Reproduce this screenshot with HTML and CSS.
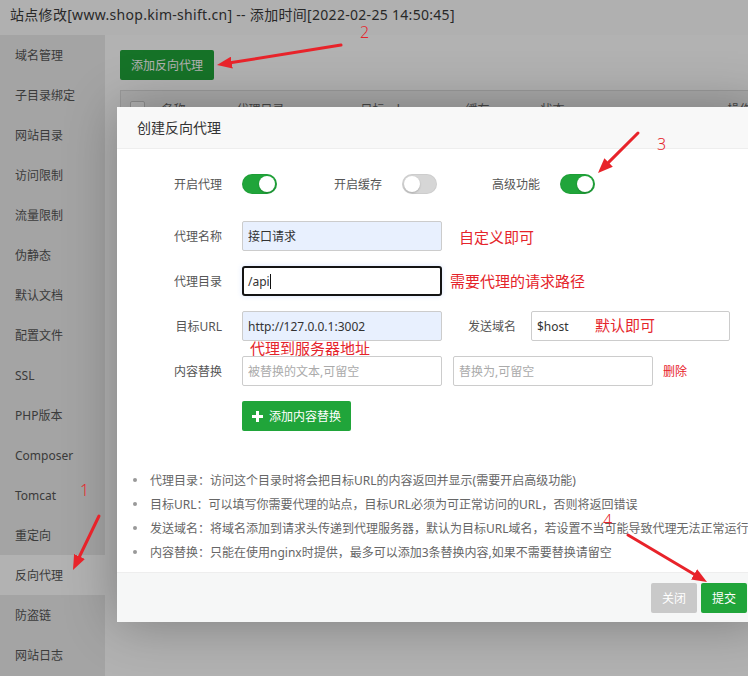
FILE: index.html
```html
<!DOCTYPE html>
<html lang="zh-CN">
<head>
<meta charset="utf-8">
<title>站点修改</title>
<link rel="stylesheet" href="styles.css">
</head>
<body>
<div class="page">
  <header class="titlebar">站点修改[www.shop.kim-shift.cn] -- 添加时间[2022-02-25 14:50:45]</header>
  <div class="layout">
    <nav class="sidebar">
      <a class="nav-item">域名管理</a>
      <a class="nav-item">子目录绑定</a>
      <a class="nav-item">网站目录</a>
      <a class="nav-item">访问限制</a>
      <a class="nav-item">流量限制</a>
      <a class="nav-item">伪静态</a>
      <a class="nav-item">默认文档</a>
      <a class="nav-item">配置文件</a>
      <a class="nav-item">SSL</a>
      <a class="nav-item">PHP版本</a>
      <a class="nav-item">Composer</a>
      <a class="nav-item">Tomcat</a>
      <a class="nav-item">重定向</a>
      <a class="nav-item active">反向代理</a>
      <a class="nav-item">防盗链</a>
      <a class="nav-item">网站日志</a>
    </nav>
    <main class="content">
      <button class="btn btn-green btn-add">添加反向代理</button>
      <table class="table">
        <colgroup>
          <col class="c-check"><col class="c-name"><col class="c-dir"><col class="c-url"><col class="c-cache"><col class="c-state"><col class="c-op">
        </colgroup>
        <thead>
          <tr>
            <th><span class="checkbox"></span></th>
            <th>名称</th><th>代理目录</th><th>目标url</th><th>缓存</th><th>状态</th><th>操作</th>
          </tr>
        </thead>
      </table>
    </main>
  </div>
</div>

<div class="shade"></div>

<div class="modal">
  <div class="modal-title">创建反向代理</div>
  <div class="modal-body">
    <div class="form-row switch-row">
      <span class="label">开启代理</span><span class="switch on"></span>
      <span class="label">开启缓存</span><span class="switch"></span>
      <span class="label label-adv">高级功能</span><span class="switch on"></span>
    </div>
    <div class="form-row row-first">
      <label class="label">代理名称</label>
      <input class="input autofill" type="text" value="接口请求">
    </div>
    <div class="form-row">
      <label class="label">代理目录</label>
      <div class="input focus"><span>/api</span><span class="caret"></span></div>
    </div>
    <div class="form-row">
      <label class="label">目标URL</label>
      <input class="input autofill" type="text" value="http://127.0.0.1:3002">
      <label class="label label-send">发送域名</label>
      <input class="input input-host" type="text" value="$host">
    </div>
    <div class="form-row">
      <label class="label">内容替换</label>
      <input class="input" type="text" placeholder="被替换的文本,可留空">
      <input class="input input-to" type="text" placeholder="替换为,可留空">
      <a class="del">删除</a>
    </div>
    <div class="form-row">
      <button class="btn btn-green btn-replace">
        <svg class="plus" width="11" height="11" viewBox="0 0 11 11"><path d="M4 0h3v4h4v3H7v4H4V7H0V4h4z" fill="#fff"/></svg>
        添加内容替换
      </button>
    </div>
    <ul class="help">
      <li>代理目录：访问这个目录时将会把目标URL的内容返回并显示(需要开启高级功能)</li>
      <li>目标URL：可以填写你需要代理的站点，目标URL必须为可正常访问的URL，否则将返回错误</li>
      <li>发送域名：将域名添加到请求头传递到代理服务器，默认为目标URL域名，若设置不当可能导致代理无法正常运行</li>
      <li>内容替换：只能在使用nginx时提供，最多可以添加3条替换内容,如果不需要替换请留空</li>
    </ul>
  </div>
  <div class="modal-footer">
    <button class="btn btn-gray">关闭</button>
    <button class="btn btn-green">提交</button>
  </div>
</div>

<div class="annotations">
  <svg class="arrows" width="748" height="676" viewBox="0 0 748 676">
    <defs>
      <marker id="ah" markerWidth="5" markerHeight="4" refX="0" refY="2" orient="auto" markerUnits="strokeWidth">
        <path d="M0,0 L5,2 L0,4 z" fill="#e8232a"/>
      </marker>
    </defs>
    <g stroke="#e8232a" stroke-width="3" stroke-linecap="round" fill="none">
      <line x1="341" y1="45" x2="231.8" y2="62.6" marker-end="url(#ah)"/>
      <line x1="638" y1="133" x2="608.6" y2="162.4" marker-end="url(#ah)"/>
      <line x1="99" y1="516" x2="79.5" y2="556.5" marker-end="url(#ah)"/>
      <line x1="628" y1="535" x2="694.1" y2="574.3" marker-end="url(#ah)"/>
    </g>
  </svg>
  <span class="note num n2">2</span>
  <span class="note num n3">3</span>
  <span class="note num n1">1</span>
  <span class="note num n4">4</span>
  <span class="note t-name">自定义即可</span>
  <span class="note t-dir">需要代理的请求路径</span>
  <span class="note t-url">代理到服务器地址</span>
  <span class="note t-host">默认即可</span>
</div>
</body>
</html>
```

FILE: styles.css
```css
* { box-sizing: border-box; }
html, body { margin: 0; padding: 0; }
body {
  width: 748px;
  height: 676px;
  overflow: hidden;
  position: relative;
  font-family: "Noto Sans", "Noto Sans CJK SC", sans-serif;
  font-size: 12px;
  color: #333;
  background: #fff;
}

.page { height: 676px; display: flex; flex-direction: column; }
.titlebar {
  height: 35px;
  line-height: 29px;
  padding-left: 10px;
  font-size: 14px;
  letter-spacing: 0.3px;
  color: #3a3a3a;
  background: #fdfdfd;
  white-space: nowrap;
  flex: none;
}
.layout { flex: 1; display: flex; min-height: 0; }
.sidebar { width: 105px; flex: none; background: #ebebeb; }
.nav-item {
  display: block;
  height: 40px;
  line-height: 41px;
  padding-left: 15px;
  color: #555;
  font-size: 12px;
}
.nav-item.active { background: #fff; }

.content { flex: 1; padding: 15px; background: #fff; overflow: hidden; }

.btn {
  height: 30px;
  border: 0;
  border-radius: 2px;
  padding: 0 11px;
  font-family: inherit;
  font-size: 12px;
  color: #fff;
  cursor: pointer;
  display: inline-flex;
  align-items: center;
}
.btn-green { background: #20a53a; }
.btn-gray { background: #c9c9c9; }
.btn-add { padding: 0 11px; }

.table {
  margin-top: 10px;
  width: 660px;
  table-layout: fixed;
  border-collapse: collapse;
  border: 1px solid #ddd;
}
.table th {
  height: 36px;
  padding: 0;
  text-align: left;
  font-weight: normal;
  color: #666;
  background: #f2f2f2;
}
.c-check { width: 41px; }
.c-name { width: 75px; }
.c-dir { width: 124px; }
.c-url { width: 105px; }
.c-cache { width: 75px; }
.c-state { width: 187px; }
.c-op { width: 53px; }
.checkbox {
  display: block;
  width: 15px;
  height: 15px;
  margin-left: 9px;
  border: 1px solid #ccc;
  border-radius: 2px;
  background: #fff;
}

.shade { position: absolute; inset: 0; background: rgba(0, 0, 0, 0.3); }

.modal {
  position: absolute;
  left: 117px;
  top: 107px;
  width: 645px;
  background: #fff;
  box-shadow: 1px 1px 50px rgba(0, 0, 0, 0.3);
}
.modal-title {
  height: 42px;
  line-height: 41px;
  padding-left: 20px;
  font-size: 14px;
  color: #333;
  background: #f8f8f8;
  border-bottom: 1px solid #eee;
}
.modal-body { padding: 25px 0 8px; }

.form-row { display: flex; align-items: center; height: 30px; margin-top: 15px; }
.switch-row { height: 20px; margin-top: 0; }
.row-first { margin-top: 27px; }
.label {
  flex: none;
  width: 125px;
  padding-right: 20px;
  text-align: right;
  color: #555;
}
.label-adv { width: 123px; }
.label-send { width: 89px; padding-right: 15px; }

.switch {
  flex: none;
  position: relative;
  width: 35px;
  height: 20px;
  border-radius: 10px;
  background: #d6d6d6;
  box-shadow: inset 0 0 0 1px rgba(0, 0, 0, 0.04);
}
.switch::after {
  content: "";
  position: absolute;
  top: 2px;
  left: 2px;
  width: 16px;
  height: 16px;
  border-radius: 50%;
  background: #fff;
  box-shadow: 0 1px 2px rgba(0, 0, 0, 0.2);
}
.switch.on { background: #20a53a; }
.switch.on::after { left: 17px; }

.input {
  flex: none;
  width: 200px;
  height: 30px;
  padding: 0 5px;
  border: 1px solid #ccc;
  border-radius: 2px;
  font-family: inherit;
  font-size: 12px;
  color: #333;
  background: #fff;
  outline: none;
}
.input::placeholder { color: #aaa; }
.input.autofill { background: #e8f0fe; }
.input.focus {
  display: flex;
  align-items: center;
  padding: 0 4px;
  border: 2px solid #141414;
  border-radius: 3px;
  box-shadow: 0 0 5px rgba(100, 150, 255, 0.25);
}
.caret { width: 1px; height: 15px; background: #111; margin-left: 0; }
.input-host { width: 199px; }
.input-to { margin-left: 11px; }
.del { margin-left: 10px; color: #e8212a; }

.btn-replace { margin-left: 125px; padding: 0 10px; }
.plus { margin-right: 6px; }

.help {
  margin: 37px 0 0;
  padding: 0 0 0 16px;
  list-style: none;
}
.help li {
  display: flex;
  align-items: center;
  height: 24px;
  white-space: nowrap;
  color: #666;
}
.help li::before {
  content: "";
  flex: none;
  width: 4px;
  height: 4px;
  border-radius: 50%;
  background: #999;
  margin-right: 13px;
}

.modal-footer {
  height: 50px;
  border-top: 1px solid #eee;
  background: #f6f7f7;
  display: flex;
  justify-content: flex-end;
  align-items: center;
  gap: 4px;
  padding-right: 15px;
}

.annotations { position: absolute; inset: 0; pointer-events: none; }
.arrows { position: absolute; left: 0; top: 0; }
.note {
  position: absolute;
  color: #e5242b;
  font-family: "Noto Sans CJK SC", sans-serif;
  font-size: 15px;
  line-height: 16px;
  white-space: nowrap;
}
.num { font-family: "Noto Sans", sans-serif; font-size: 16px; font-weight: 300; line-height: 13px; }
.n2 { left: 360px; top: 26px; }
.n3 { left: 657px; top: 138px; }
.n1 { left: 80px; top: 484px; }
.n4 { left: 603px; top: 514px; }
.t-name { left: 459px; top: 229px; }
.t-dir { left: 450px; top: 273px; }
.t-url { left: 250px; top: 340px; }
.t-host { left: 595px; top: 317px; }
```
